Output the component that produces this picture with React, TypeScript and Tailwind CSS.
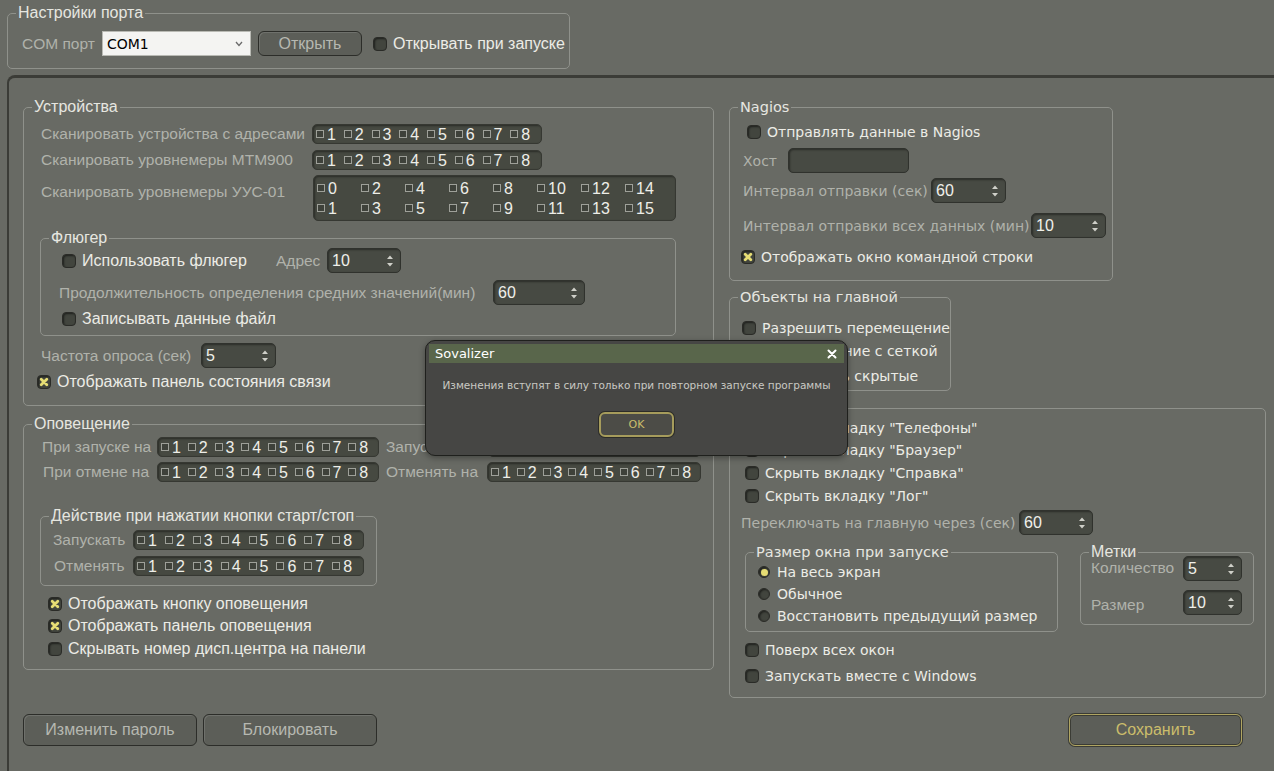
import type { ReactNode } from 'react';

const narrow = "font-['Liberation_Sans',Arial,sans-serif]";
const sans = "font-['DejaVu_Sans','Liberation_Sans',sans-serif]";

const dim = 'text-[#b0b2ab]';
const bright = 'text-[#ececE6]';

function Box({ checked = false }: { checked?: boolean }) {
  return (
    <span className="flex h-[14px] w-[14px] shrink-0 items-center justify-center rounded-[4px] border border-[#2a2b27] bg-[#42453e] shadow-[inset_1px_1px_2px_rgba(0,0,0,0.55)]">
      {checked && (
        <svg viewBox="0 0 10 10" className="h-[10px] w-[10px]">
          <path d="M2.2 2.2 L7.8 7.8 M7.8 2.2 L2.2 7.8" stroke="#e6dd74" strokeWidth="2.8" strokeLinecap="round" />
        </svg>
      )}
    </span>
  );
}

function CheckRow({
  label,
  checked = false,
  font = sans,
  className = '',
}: {
  label: string;
  checked?: boolean;
  font?: string;
  className?: string;
}) {
  return (
    <div className={`flex h-[18px] items-center gap-[6px] ${className}`}>
      <Box checked={checked} />
      <span className={`${font} ${font === sans ? 'text-[14px]' : 'text-[16px]'} whitespace-nowrap leading-none ${bright}`}>{label}</span>
    </div>
  );
}

function Radio({ label, checked = false }: { label: string; checked?: boolean }) {
  return (
    <div className="flex h-[18px] items-center gap-[7px]">
      <span className="flex h-[12px] w-[12px] items-center justify-center rounded-full border border-[#2a2b27] bg-[#42453e] shadow-[inset_1px_1px_2px_rgba(0,0,0,0.55)]">
        {checked && <span className="h-[7px] w-[7px] rounded-full bg-[#e6dd74]" />}
      </span>
      <span className={`${sans} text-[14px] leading-none ${bright}`}>{label}</span>
    </div>
  );
}

function Spin({ value, className = '' }: { value: string; className?: string }) {
  return (
    <div
      className={`flex h-[25px] shrink-0 items-center justify-between rounded-[5px] border border-[#30322d] bg-[#474a43] pl-[4px] pr-[6px] shadow-[inset_1px_1px_2px_rgba(0,0,0,0.4)] ${className}`}
    >
      <span className={`${narrow} text-[16px] leading-none text-[#f0f0ea]`}>{value}</span>
      <svg viewBox="0 0 8 14" className="h-[14px] w-[8px]">
        <path d="M1 5 L4 1.5 L7 5 Z" fill="#cfd0c9" />
        <path d="M1 9 L4 12.5 L7 9 Z" fill="#cfd0c9" />
      </svg>
    </div>
  );
}

function Strip({ className = '' }: { className?: string }) {
  return (
    <div
      className={`flex h-[20px] shrink-0 items-center rounded-[5px] border border-[#363832] bg-[#464941] px-[3px] shadow-[inset_1px_1px_2px_rgba(0,0,0,0.4)] ${className}`}
    >
      {[1, 2, 3, 4, 5, 6, 7, 8].map((n) => (
        <span key={n} className="flex flex-1 items-center gap-[3px]">
          <span className="h-[8px] w-[8px] border border-[#9ea099] bg-[#3e413a]" />
          <span className={`${narrow} mt-[2px] text-[16px] leading-none text-[#eeeee8]`}>{n}</span>
        </span>
      ))}
    </div>
  );
}

function Group({
  title,
  className = '',
  titleFont = sans,
  children,
}: {
  title?: string;
  className?: string;
  titleFont?: string;
  children: ReactNode;
}) {
  return (
    <fieldset className={`shrink-0 rounded-[5px] border border-[#8f918b] ${className}`}>
      {title && (
        <legend
          className={`ml-[8px] whitespace-nowrap px-[2px] leading-[20px] text-[#e6e6e0] ${titleFont} ${titleFont === sans ? 'text-[14.5px]' : 'text-[16px]'}`}
        >
          {title}
        </legend>
      )}
      {children}
    </fieldset>
  );
}

function Label({ text, className = '', font = narrow }: { text: string; className?: string; font?: string }) {
  return (
    <span className={`shrink-0 whitespace-nowrap leading-none ${dim} ${font} ${font === sans ? 'text-[14px]' : 'text-[15.5px]'} ${className}`}>
      {text}
    </span>
  );
}

function Button({ text, gold = false, className = '' }: { text: string; gold?: boolean; className?: string }) {
  return (
    <div
      className={`flex h-[32px] shrink-0 items-center justify-center rounded-[6px] border ${
        gold ? 'border-[#b0a562] shadow-[0_0_0_1px_#3b3c35,inset_0_0_0_1px_#3b3c35]' : 'border-[#2c2d29] shadow-[inset_1px_1px_0_rgba(255,255,255,0.12)]'
      } bg-[#5c5e58] ${className}`}
    >
      <span className={`${narrow} text-[16px] leading-none ${gold ? 'text-[#cbbd6b]' : 'text-[#b6b8b1]'}`}>{text}</span>
    </div>
  );
}

const uusTop = [0, 2, 4, 6, 8, 10, 12, 14];
const uusBottom = [1, 3, 5, 7, 9, 11, 13, 15];

export default function App() {
  return (
    <div className="relative flex h-[771px] w-[1274px] flex-col overflow-hidden bg-[#686a64]">
      {/* port settings */}
      <Group title="Настройки порта" titleFont={narrow} className="ml-[7px] mt-[3px] h-[66px] w-[563px]">
        <div className="mt-[8px] flex h-[25px] items-center pl-[14px]">
          <Label text="COM порт" className="w-[80px]" />
          <div className="flex h-[25px] w-[149px] items-center justify-between border border-[#b9bab4] bg-[#f4f4f2] pl-[4px] pr-[7px]">
            <span className={`${sans} text-[14px] leading-none text-black`}>COM1</span>
            <svg viewBox="0 0 8 6" className="h-[6px] w-[8px]">
              <path d="M1 1 L4 4.5 L7 1" stroke="#6b6b6b" strokeWidth="1.3" fill="none" />
            </svg>
          </div>
          <Button text="Открыть" className="ml-[7px] !h-[25px] w-[104px]" />
          <CheckRow label="Открывать при запуске" font={narrow} className="ml-[11px]" />
        </div>
      </Group>

      {/* main panel */}
      <div className="ml-[7px] mt-[6px] flex flex-1 flex-col rounded-tl-[8px] border-l-[2px] border-t-[3px] border-[#3b3c37]">
        <div className="flex pl-[14px] pt-[19px]">
          {/* left column */}
          <div className="flex w-[691px] shrink-0 flex-col">
            <Group title="Устройства" titleFont={narrow} className="h-[309px] w-[691px]">
              <div className="flex flex-col pl-[17px]">
                <div className="mt-[7px] flex items-center">
                  <Label text="Сканировать устройства с адресами" className="w-[271px]" />
                  <Strip className="w-[230px]" />
                </div>
                <div className="mt-[6px] flex items-center">
                  <Label text="Сканировать уровнемеры МТМ900" className="w-[271px]" />
                  <Strip className="w-[230px]" />
                </div>
                <div className="mt-[5px] flex items-start">
                  <Label text="Сканировать уровнемеры УУС-01" className="mt-[9px] w-[272px]" />
                  <div className="flex h-[46px] w-[363px] flex-col justify-center gap-[2px] rounded-[5px] border border-[#363832] bg-[#464941] pl-[3px] shadow-[inset_1px_1px_2px_rgba(0,0,0,0.4)]">
                    {[uusTop, uusBottom].map((row, i) => (
                      <div key={i} className="flex h-[18px] items-center">
                        {row.map((n) => (
                          <span key={n} className="flex w-[44px] items-center gap-[3px]">
                            <span className="h-[8px] w-[8px] border border-[#9ea099] bg-[#3e413a]" />
                            <span className={`${narrow} mt-[2px] text-[16px] leading-none text-[#eeeee8]`}>{n}</span>
                          </span>
                        ))}
                      </div>
                    ))}
                  </div>
                </div>

                <Group title="Флюгер" titleFont={narrow} className="-ml-[1px] mt-[7px] h-[108px] w-[636px]">
                  <div className="flex items-center pl-[21px]">
                    <CheckRow label="Использовать флюгер" font={narrow} className="w-[214px]" />
                    <Label text="Адрес" className="w-[51px]" />
                    <Spin value="10" className="w-[74px]" />
                  </div>
                  <div className="mt-[7px] flex items-center pl-[18px]">
                    <Label text="Продолжительность определения средних значений(мин)" className="w-[434px]" />
                    <Spin value="60" className="w-[92px]" />
                  </div>
                  <CheckRow label="Записывать данные файл" font={narrow} className="mt-[5px] pl-[21px]" />
                </Group>

                <div className="mt-[7px] flex items-center">
                  <Label text="Частота опроса (сек)" className="w-[160px]" />
                  <Spin value="5" className="w-[75px]" />
                </div>
                <CheckRow label="Отображать панель состояния связи" checked font={narrow} className="-ml-[4px] mt-[5px]" />
              </div>
            </Group>

            <Group title="Оповещение" titleFont={narrow} className="mt-[8px] h-[256px] w-[691px]">
              <div className="flex flex-col pl-[18px]">
                <div className="mt-[3px] flex items-center">
                  <Label text="При запуске на" className="w-[115px]" />
                  <Strip className="w-[222px]" />
                  <Label text="Запускать на" className="ml-[7px] w-[102px]" />
                  <Strip className="w-[213px]" />
                </div>
                <div className="mt-[5px] flex items-center">
                  <Label text="При отмене на" className="w-[115px] pl-[1px]" />
                  <Strip className="w-[222px]" />
                  <Label text="Отменять на" className="ml-[7px] w-[101px]" />
                  <Strip className="w-[214px]" />
                </div>

                <Group title="Действие при нажатии кнопки старт/стоп" titleFont={narrow} className="-ml-[2px] mt-[24px] h-[80px] w-[337px]">
                  <div className="mt-[4px] flex items-center pl-[12px]">
                    <Label text="Запускать" className="w-[80px]" />
                    <Strip className="w-[231px]" />
                  </div>
                  <div className="mt-[6px] flex items-center pl-[12px]">
                    <Label text="Отменять" className="w-[80px] pl-[1px]" />
                    <Strip className="w-[231px]" />
                  </div>
                </Group>

                <div className="flex flex-col pl-[6px]">
                  <CheckRow label="Отображать кнопку оповещения" checked font={narrow} className="mt-[9px]" />
                  <CheckRow label="Отображать панель оповещения" checked font={narrow} className="mt-[4px]" />
                  <CheckRow label="Скрывать номер дисп.центра на панели" font={narrow} className="mt-[5px]" />
                </div>
              </div>
            </Group>
          </div>

          {/* right column */}
          <div className="ml-[15px] flex w-[537px] shrink-0 flex-col">
            <Group title="Nagios" className="h-[184px] w-[384px]">
              <div className="flex flex-col pl-[13px]">
                <CheckRow label="Отправлять данные в Nagios" className="ml-[4px] mt-[6px]" />
                <div className="mt-[7px] flex items-center">
                  <Label text="Хост" font={sans} className="w-[45px]" />
                  <div className="h-[25px] w-[121px] rounded-[5px] border border-[#30322d] bg-[#474a43] shadow-[inset_1px_1px_2px_rgba(0,0,0,0.4)]" />
                </div>
                <div className="mt-[5px] flex items-center">
                  <Label text="Интервал отправки (сек)" font={sans} className="w-[188px]" />
                  <Spin value="60" className="w-[75px]" />
                </div>
                <div className="mt-[10px] flex items-center">
                  <Label text="Интервал отправки всех данных (мин)" font={sans} className="w-[288px]" />
                  <Spin value="10" className="w-[75px]" />
                </div>
                <CheckRow label="Отображать окно командной строки" checked className="-ml-[2px] mt-[10px]" />
              </div>
            </Group>

            <Group title="Объекты на главной" className="mt-[6px] h-[104px] w-[222px]">
              <div className="flex flex-col pl-[12px]">
                <CheckRow label="Разрешить перемещение" className="mt-[12px]" />
                <CheckRow label="Выравнивание с сеткой" className="mt-[5px]" />
                <CheckRow label="Показывать скрытые" className="mt-[7px]" />
              </div>
            </Group>

            <div className="mt-[17px] h-[290px] w-[537px] rounded-[5px] border border-[#8f918b]">
              <div className="flex flex-col pl-[15px]">
                <CheckRow label='Скрыть вкладку "Телефоны"' className="mt-[10px]" />
                <CheckRow label='Скрыть вкладку "Браузер"' className="mt-[4px]" />
                <CheckRow label='Скрыть вкладку "Справка"' className="mt-[5px]" />
                <CheckRow label='Скрыть вкладку "Лог"' className="mt-[5px]" />
                <div className="-ml-[4px] mt-[5px] flex items-center">
                  <Label text="Переключать на главную через (сек)" font={sans} className="w-[278px]" />
                  <Spin value="60" className="w-[74px]" />
                </div>

                <div className="mt-[7px] flex items-start">
                  <Group title="Размер окна при запуске" className="h-[90px] w-[313px]">
                    <div className="flex flex-col gap-[4px] pl-[12px] pt-[1px]">
                      <Radio label="На весь экран" checked />
                      <Radio label="Обычное" />
                      <Radio label="Восстановить предыдущий размер" />
                    </div>
                  </Group>
                  <Group title="Метки" titleFont={narrow} className="ml-[22px] h-[83px] w-[174px]">
                    <div className="-mt-[6px] flex items-start pl-[10px]">
                      <Label text="Количество" className="mt-[4px] w-[92px]" />
                      <Spin value="5" className="w-[59px]" />
                    </div>
                    <div className="mt-[9px] flex items-center pl-[10px]">
                      <Label text="Размер" className="mt-[4px] w-[92px]" />
                      <Spin value="10" className="w-[59px]" />
                    </div>
                  </Group>
                </div>

                <CheckRow label="Поверх всех окон" className="mt-[9px]" />
                <CheckRow label="Запускать вместе с Windows" className="mt-[8px]" />
              </div>
            </div>
          </div>
        </div>

        {/* bottom buttons */}
        <div className="mt-[16px] flex items-center justify-between pl-[14px] pr-[32px]">
          <div className="flex gap-[6px]">
            <Button text="Изменить пароль" className="w-[174px]" />
            <Button text="Блокировать" className="w-[174px]" />
          </div>
          <Button text="Сохранить" gold className="w-[173px]" />
        </div>
      </div>

      {/* message box */}
      <div className="absolute left-[425px] top-[340px] flex h-[116px] w-[423px] flex-col rounded-[10px] border border-[#1f201d] bg-[#464644] shadow-[0_2px_6px_rgba(0,0,0,0.35)]">
        <div className="mx-[3px] mt-[3px] flex h-[19px] items-center justify-between bg-[#59664b] pl-[6px] pr-[7px]">
          <span className={`${sans} text-[13px] leading-none text-white`}>Sovalizer</span>
          <svg viewBox="0 0 10 10" className="h-[10px] w-[10px]">
            <path d="M1.5 1.5 L8.5 8.5 M8.5 1.5 L1.5 8.5" stroke="#ffffff" strokeWidth="2" strokeLinecap="round" />
          </svg>
        </div>
        <p className={`${sans} mt-[17px] text-center text-[10.5px] leading-none text-[#c9c9c3]`}>
          Изменения вступят в силу только при повторном запуске программы
        </p>
        <div className="mx-auto mt-[21px] flex h-[25px] w-[75px] items-center justify-center rounded-[6px] border-[2px] border-[#a69c5c] bg-[#4c4c47] shadow-[0_0_0_1px_#2c2c28]">
          <span className={`${sans} text-[11px] leading-none text-[#cbbd6b]`}>OK</span>
        </div>
      </div>
    </div>
  );
}
